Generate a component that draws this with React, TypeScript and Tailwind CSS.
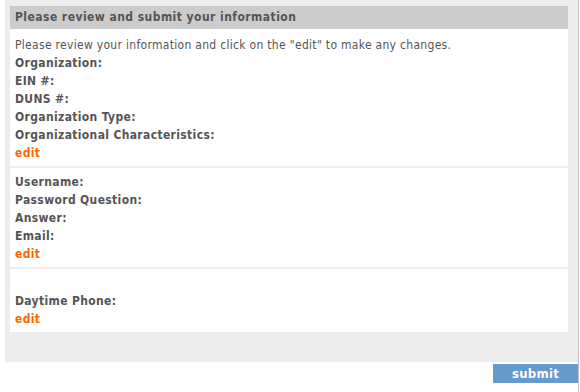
export default function App() {
  const label = "font-bold text-[#555] leading-[18px] tracking-[0.35px]";
  const edit = "font-bold text-[#ff6600] leading-[18px] tracking-[0.35px]";
  return (
    <div className="relative w-[580px] h-[392px] bg-white text-[12px] text-[#555] font-['DejaVu_Sans_Condensed','DejaVu_Sans',sans-serif]">
      <div className="ml-[5px] w-[573px] bg-[#ededed] pt-[6px] pl-[5px] pr-[10px] pb-[30px]">
        <div className="h-[23px] bg-[#cccccc] px-[5px] font-bold leading-[23px] tracking-[0.45px] text-[#555]">
          Please review and submit your information
        </div>
        <div className="bg-white">
          <div className="px-[5px] pt-[7px] pb-[4px] border-b-2 border-[#eeeeee]">
            <p className="leading-[18px] tracking-[0.3px]">
              Please review your information and click on the "edit" to make any changes.
            </p>
            <p className={label}>Organization:</p>
            <p className={label}>EIN #:</p>
            <p className={label}>DUNS #:</p>
            <p className={label}>Organization Type:</p>
            <p className={label}>Organizational Characteristics:</p>
            <p className={edit}>edit</p>
          </div>
          <div className="px-[5px] pt-[5px] pb-[4px] border-b-2 border-[#eeeeee]">
            <p className={label}>Username:</p>
            <p className={label}>Password Question:</p>
            <p className={label}>Answer:</p>
            <p className={label}>Email:</p>
            <p className={edit}>edit</p>
          </div>
          <div className="px-[5px] pt-[5px] pb-[4px]">
            <p className="leading-[18px]">&nbsp;</p>
            <p className={label}>Daytime Phone:</p>
            <p className={edit}>edit</p>
          </div>
        </div>
      </div>
      <div className="flex justify-end pr-[2px] mt-[2px]">
        <button className="w-[85px] h-[19px] bg-[#6699cc] text-white font-bold text-[13px] leading-[19px] tracking-[0.3px]">
          submit
        </button>
      </div>
      <div className="absolute top-0 bottom-0 left-[578px] w-px bg-[#c4c4c4]" />
    </div>
  );
}
